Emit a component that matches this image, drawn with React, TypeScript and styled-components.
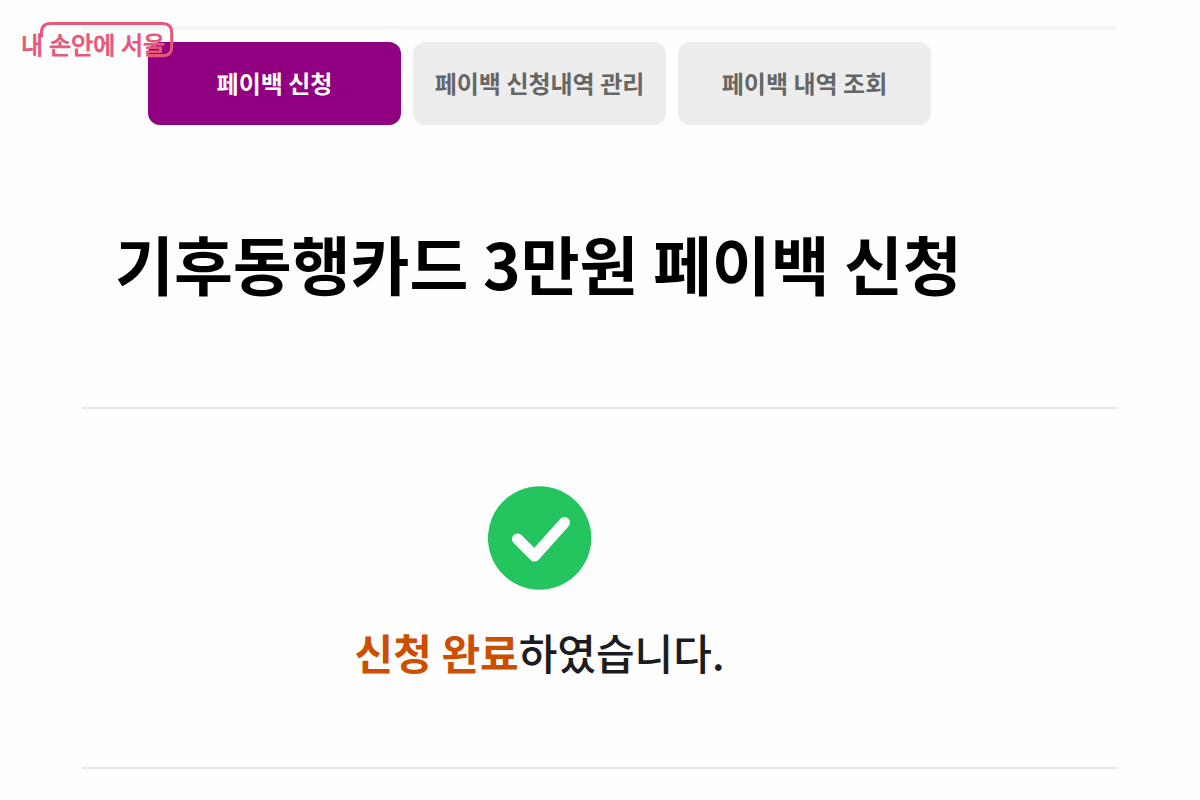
import React from "react";
import styled, { createGlobalStyle } from "styled-components";

const GlobalStyle = createGlobalStyle`
  *, *::before, *::after { box-sizing: border-box; }
  body {
    margin: 0;
    background: #fefefe;
    color: #1c1c1e;
    font-family: "Noto Sans CJK KR", sans-serif;
  }
`;

const Page = styled.div`
  position: relative;
  padding: 26px 83px 30px 82px;
`;

const TopRule = styled.div`
  height: 5px;
  background: linear-gradient(#f1f1f1, #f5f5f5 50%, #fdfdfd);
`;

const Tabs = styled.nav`
  display: flex;
  gap: 12px;
  padding: 11px 186px 0 66px;
`;

const Tab = styled.button<{ $active?: boolean }>`
  flex: 1 1 0;
  height: 83px;
  padding: 0 0 2px;
  border: 0;
  border-radius: 12px;
  background: ${(p) => (p.$active ? "#900081" : "#ededed")};
  color: ${(p) => (p.$active ? "#ffffff" : "#666666")};
  font-family: inherit;
  font-size: 24px;
  font-weight: 700;
  line-height: 36px;
  white-space: nowrap;
  cursor: pointer;
`;

const Title = styled.h1`
  margin: 0;
  padding: 89px 122px 97px 0;
  color: #000000;
  font-size: 64px;
  font-weight: 700;
  line-height: 96px;
  text-align: center;
  white-space: nowrap;
`;

const Result = styled.section`
  display: flex;
  flex-direction: column;
  align-items: center;
  gap: 30px;
  padding: 77px 120px 83px 0;
  border-top: 2px solid #e6e6e6;
  border-bottom: 2px solid #e6e6e6;
`;

const CheckIcon = styled.svg`
  display: block;
  width: 104px;
  height: 104px;
`;

const Message = styled.p`
  margin: 0;
  font-size: 42px;
  font-weight: 500;
  line-height: 64px;
  white-space: nowrap;
`;

const Highlight = styled.strong`
  color: #cc4e00;
  font-weight: 700;
`;

const Watermark = styled.div`
  position: absolute;
  top: 20px;
  left: 20px;
  width: 156px;
  height: 40px;
  color: #e6587a;
`;

const WatermarkDrawing = styled.svg`
  display: block;
  width: 156px;
  height: 40px;
  overflow: visible;
`;

const WatermarkText = styled.text`
  fill: currentColor;
  stroke: currentColor;
  stroke-width: 1px;
  stroke-linejoin: round;
  font-size: 24px;
  font-weight: 400;
`;

export default function App() {
  return (
    <>
      <GlobalStyle />
      <Page>
        <TopRule />
        <Tabs aria-label="페이백 메뉴">
          <Tab type="button" $active>페이백 신청</Tab>
          <Tab type="button">페이백 신청내역 관리</Tab>
          <Tab type="button">페이백 내역 조회</Tab>
        </Tabs>
        <main>
          <Title>기후동행카드 3만원 페이백 신청</Title>
          <Result>
            <CheckIcon viewBox="0 0 104 104" aria-hidden="true">
              <circle cx="51.6" cy="52" r="51.7" fill="#24c55e" />
              <path
                d="M29.5 53 46.5 70 76.5 36.5"
                fill="none"
                stroke="#fff"
                strokeWidth="11"
                strokeLinecap="round"
                strokeLinejoin="round"
              />
            </CheckIcon>
            <Message>
              <Highlight>신청 완료</Highlight>하였습니다.
            </Message>
          </Result>
        </main>
        <Watermark>
          <WatermarkDrawing viewBox="0 0 156 40">
            <path
              d="M21.5 16V12.5Q21.5 3.5 30.7 3.5H143Q151.7 3.5 151.7 12.5V27Q151.7 35.7 143 35.7H129"
              fill="none"
              stroke="currentColor"
              strokeWidth="3"
              strokeLinecap="round"
            />
            <WatermarkText x="1" y="34">내</WatermarkText>
            <WatermarkText x="29" y="34">손안에</WatermarkText>
            <WatermarkText x="101" y="34">서울</WatermarkText>
          </WatermarkDrawing>
        </Watermark>
      </Page>
    </>
  );
}
